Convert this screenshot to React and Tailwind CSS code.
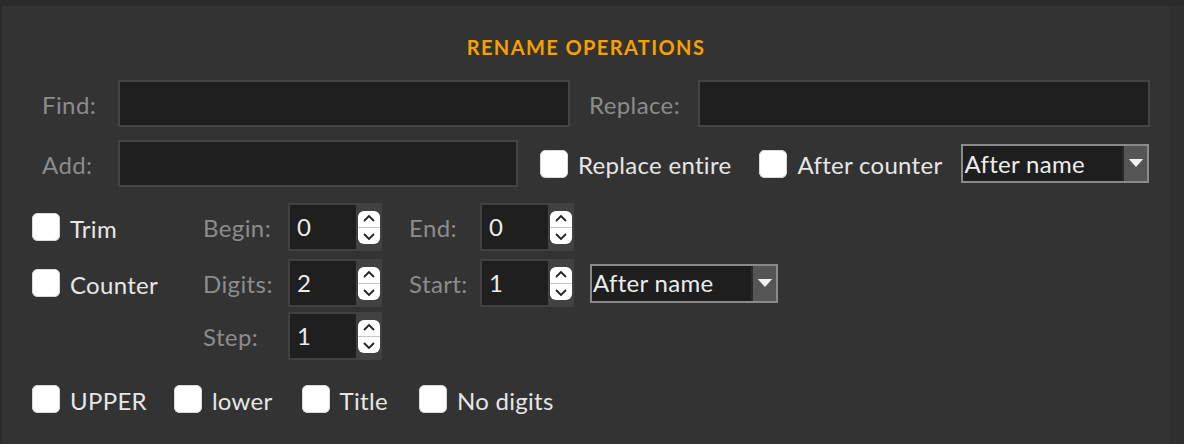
const font = { fontFamily: "Lato, 'Noto Sans', sans-serif" };

function Check({ label, className = "" }) {
  return (
    <label className={`flex items-center ${className}`}>
      <span className="h-[28px] w-[28px] shrink-0 rounded-[6px] bg-white shadow-[inset_0_0_0_1px_#d8d8d8]" />
      <span className="ml-[10px] pt-[3px] text-[24px] leading-none tracking-[0.3px] text-[#e6e6e6]">{label}</span>
    </label>
  );
}

function Field({ label, labelW, width }) {
  return (
    <div className="flex items-center">
      <span className={`${labelW} pt-[2px] text-[24px] tracking-[0.4px] text-[#8c8c8c]`}>{label}</span>
      <div className={`${width} h-[47px] border-2 border-[#444] bg-[#1f1f1f]`} />
    </div>
  );
}

function Spin({ value }) {
  return (
    <div className="flex h-[48px] w-[94px] items-center bg-[#414141] p-[2px]">
      <div className="flex h-full w-[67px] items-center bg-[#1f1f1f] pl-[7px] text-[24px] text-[#ececec]">
        {value}
      </div>
      <div className="ml-[2px] flex h-[33px] w-[22px] flex-col rounded-[6px] bg-white">
        <svg viewBox="0 0 22 16" className="h-[16px] w-[22px]" fill="none" stroke="#222" strokeWidth="1.8">
          <path d="M6 10 L11 5 L16 10" />
        </svg>
        <div className="h-px bg-[#c8c8c8]" />
        <svg viewBox="0 0 22 16" className="h-[16px] w-[22px]" fill="none" stroke="#222" strokeWidth="1.8">
          <path d="M6 6 L11 11 L16 6" />
        </svg>
      </div>
    </div>
  );
}

function Select({ width }) {
  return (
    <div className={`${width} flex h-[39px] border-2 border-[#8a8a8a] bg-[#1e1e1e]`}>
      <div className="flex flex-1 items-center pl-[1px] text-[24px] tracking-[0.3px] text-[#ececec]">After name</div>
      <div className="flex w-[25px] items-center justify-center border-l-2 border-[#2a2a2a] bg-[#555]">
        <svg viewBox="0 0 16 10" className="h-[9px] w-[16px]">
          <path d="M0 0 H16 L8 9 Z" fill="#f2f2f2" />
        </svg>
      </div>
    </div>
  );
}

function Label({ children, w }) {
  return <span className={`${w} pt-[2px] text-[24px] tracking-[0.4px] text-[#8c8c8c]`}>{children}</span>;
}

export default function App() {
  return (
    <div className="flex h-[444px] w-[1184px] bg-[#2b2b2b]" style={font}>
      <div className="ml-[2px] mt-[6px] flex w-[1168px] flex-col bg-[#333]">
        <div className="pt-[29px] text-center text-[20px] font-bold leading-[24px] tracking-[1.4px] text-[#f7a000]">
          RENAME OPERATIONS
        </div>

        <div className="mt-[21px] flex items-center pl-[40px]">
          <Field label="Find:" labelW="w-[76px]" width="w-[452px]" />
          <div className="ml-[19px]">
            <Field label="Replace:" labelW="w-[109px]" width="w-[452px]" />
          </div>
        </div>

        <div className="mt-[13px] flex items-center pl-[40px]">
          <Field label="Add:" labelW="w-[76px]" width="w-[400px]" />
          <Check label="Replace entire" className="ml-[22px]" />
          <Check label="After counter" className="ml-[28px]" />
          <div className="ml-[19px]">
            <Select width="w-[188px]" />
          </div>
        </div>

        <div className="mt-[16px] flex flex-col pl-[30px]">
          <div className="flex items-center">
            <Check label="Trim" className="w-[171px]" />
            <Label w="w-[85px]">Begin:</Label>
            <Spin value="0" />
            <Label w="ml-[27px] w-[71px]">End:</Label>
            <Spin value="0" />
          </div>
          <div className="mt-[8px] flex items-center">
            <Check label="Counter" className="w-[171px]" />
            <Label w="w-[85px]">Digits:</Label>
            <Spin value="2" />
            <Label w="ml-[27px] w-[71px]">Start:</Label>
            <Spin value="1" />
            <div className="ml-[16px]">
              <Select width="w-[188px]" />
            </div>
          </div>
          <div className="mt-[5px] flex items-center">
            <div className="w-[171px]" />
            <Label w="w-[85px]">Step:</Label>
            <Spin value="1" />
          </div>
        </div>

        <div className="mt-[25px] flex items-center pl-[30px]">
          <Check label="UPPER" />
          <Check label="lower" className="ml-[27px]" />
          <Check label="Title" className="ml-[29px]" />
          <Check label="No digits" className="ml-[31px]" />
        </div>
      </div>
      <div className="mt-[6px] flex-1 bg-[#2f2f2f]" />
    </div>
  );
}
